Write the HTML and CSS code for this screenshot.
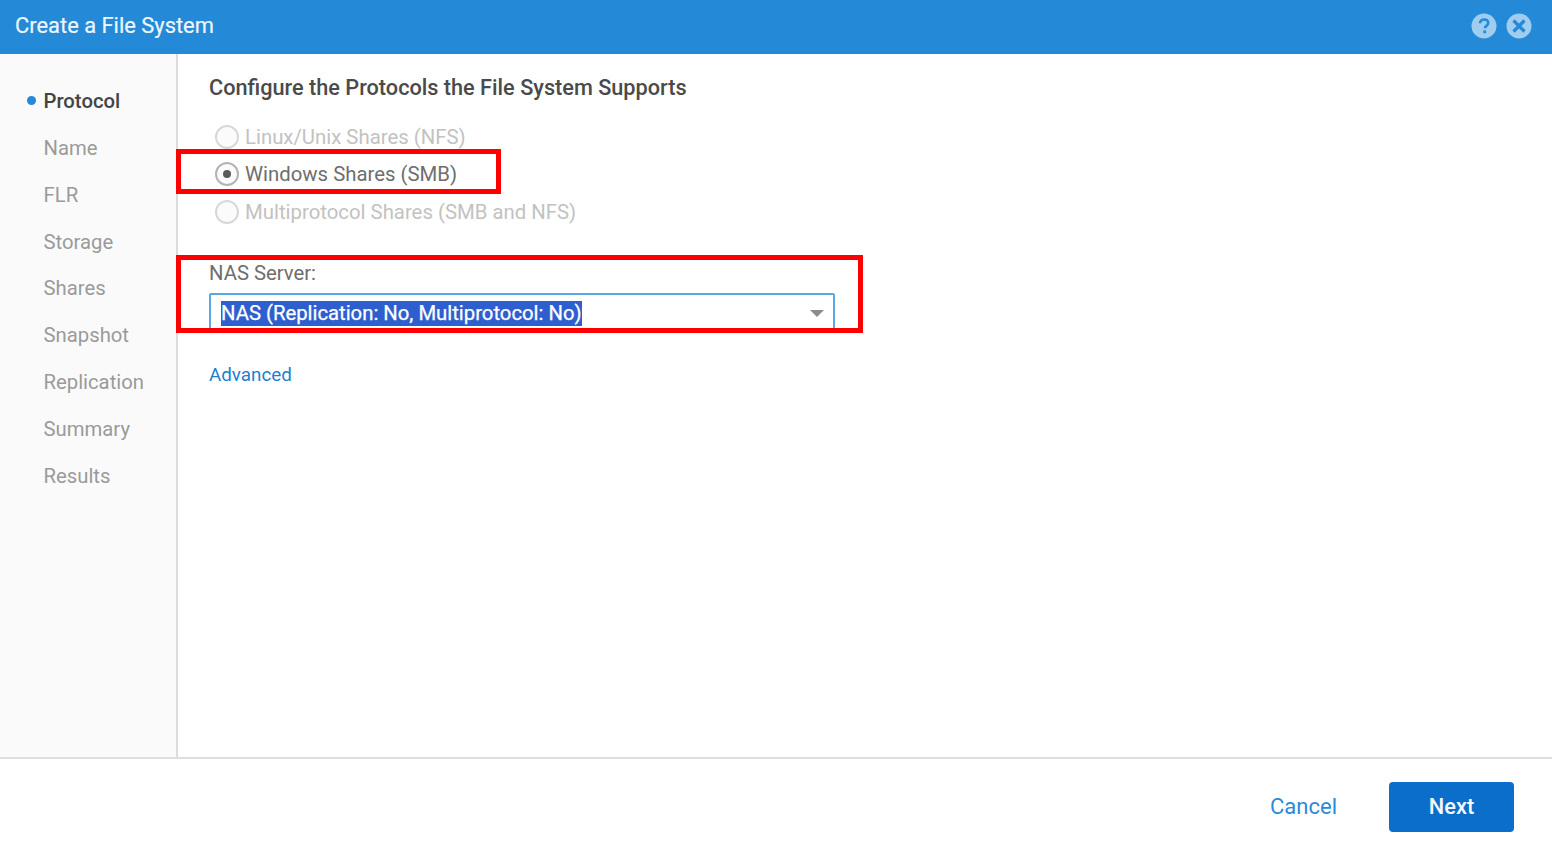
FILE: index.html
```html
<!DOCTYPE html>
<html lang="en">
<head>
<meta charset="utf-8">
<title>Create a File System</title>
<link rel="stylesheet" href="styles.css">
</head>
<body>
<div class="dialog">
  <header class="header">
    <h1 class="title">Create a File System</h1>
    <div class="header-icons">
      <svg class="hicon" viewBox="0 0 26 26" aria-hidden="true"><circle cx="13" cy="13" r="12.5" fill="#9fcdf0"/><path d="M9 10.3c0-2.4 1.8-3.8 4.1-3.8 2.4 0 4.1 1.4 4.1 3.4 0 1.6-.9 2.4-2 3.2-1 .7-1.3 1.2-1.3 2.2" fill="none" stroke="#2489d6" stroke-width="2.6"/><rect x="12.3" y="17.4" width="2.8" height="2.8" fill="#2489d6"/></svg>
      <svg class="hicon" viewBox="0 0 26 26" aria-hidden="true"><circle cx="13" cy="13" r="12.5" fill="#9fcdf0"/><path d="M7.5 7.5l11 11M18.5 7.5l-11 11" fill="none" stroke="#2489d6" stroke-width="3.2"/></svg>
    </div>
  </header>
  <div class="body">
    <nav class="steps">
      <div class="step active">Protocol</div>
      <div class="step">Name</div>
      <div class="step">FLR</div>
      <div class="step">Storage</div>
      <div class="step">Shares</div>
      <div class="step">Snapshot</div>
      <div class="step">Replication</div>
      <div class="step">Summary</div>
      <div class="step">Results</div>
    </nav>
    <main class="content">
      <h2 class="heading">Configure the Protocols the File System Supports</h2>
      <div class="options">
        <div class="option disabled"><span class="radio"></span>Linux/Unix Shares (NFS)</div>
        <div class="option"><span class="radio checked"></span>Windows Shares (SMB)</div>
        <div class="option disabled"><span class="radio"></span>Multiprotocol Shares (SMB and NFS)</div>
      </div>
      <div class="field-label">NAS Server:</div>
      <div class="select-clip">
        <div class="select"><span class="selected-text">NAS (Replication: No, Multiprotocol: No)</span><span class="caret"></span></div>
      </div>
      <a class="advanced" href="#">Advanced</a>
      <div class="mark mark-smb"></div>
      <div class="mark mark-nas"></div>
    </main>
  </div>
  <footer class="footer">
    <a class="cancel" href="#">Cancel</a>
    <button class="next" type="button">Next</button>
  </footer>
</div>
</body>
</html>
```
FILE: styles.css
```css
* { box-sizing: border-box; }
html, body { margin: 0; height: 100%; }
body { background: #fff; font-family: Roboto, "Liberation Sans", sans-serif; color: #6e6e6e; overflow: hidden; }
.dialog { width: 1552px; height: 851px; display: flex; flex-direction: column; }
.header { height: 54px; flex: none; background: #2489d6; display: flex; align-items: center; justify-content: space-between; padding: 0 20px 0 15px; }
.title { margin: 0; font-size: 21.9px; font-weight: 400; color: #eef6fc; position: relative; top: -2px; -webkit-text-stroke: 0.2px #eef6fc; }
.header-icons { display: flex; gap: 9px; position: relative; top: -1px; }
.hicon { width: 26px; height: 26px; display: block; }
.body { height: 703px; flex: none; display: flex; }
.steps { width: 178px; flex: none; background: #fafafa; border-right: 2px solid #dcdcdc; padding: 23.9px 0 0 43.5px; }
.step { height: 46.875px; line-height: 47px; font-size: 20.3px; color: #9a9a9a; position: relative; }
.step.active { color: #444; font-weight: 500; }
.step.active::before { content: ""; position: absolute; left: -17px; top: 18px; width: 9px; height: 9px; border-radius: 50%; background: #2489d6; }
.content { flex: 1; position: relative; padding: 20px 0 0 31px; }
.heading { margin: 0; height: 28px; line-height: 28px; font-size: 21.7px; font-weight: 500; color: #4a4a4a; }
.options { margin-top: 16px; }
.option { height: 37.5px; display: flex; align-items: center; font-size: 20.35px; color: #6e6e6e; }
.option.disabled { color: #c2c2c2; }
.radio { width: 24px; height: 24px; margin: 0 6px 0 6px; flex: none; border-radius: 50%; border: 2px solid #d8d8d8; background: #fbfbfb; display: flex; align-items: center; justify-content: center; }
.radio.checked { border-color: #b4b4b4; }
.radio.checked::after { content: ""; width: 8px; height: 8px; border-radius: 50%; background: #5a5a5a; }
.field-label { margin-top: 28px; height: 28px; line-height: 28px; font-size: 20.3px; color: #6e6e6e; }
.select-clip { margin-top: 6px; width: 626px; height: 36px; overflow: hidden; }
.select { height: 44px; border: 2px solid #5aa7e6; border-radius: 2px; padding: 6px 0 0 10px; display: flex; align-items: flex-start; justify-content: space-between; }
.selected-text { background: #2f5fce; color: #fff; font-size: 20.3px; line-height: 25px; -webkit-text-stroke: 0.25px #fff; }
.caret { width: 0; height: 0; margin: 9px 9px 0 0; border-left: 7px solid transparent; border-right: 7px solid transparent; border-top: 7px solid #8c8c8c; }
.advanced { display: block; margin-top: 32px; font-size: 18.8px; line-height: 28px; color: #1b7fd0; text-decoration: none; width: max-content; }
.mark { position: absolute; border: 5px solid #ff0000; left: -2px; }
.mark-smb { top: 95px; width: 325px; height: 45px; }
.mark-nas { top: 201px; width: 687px; height: 78px; }
.footer { flex: 1; border-top: 2px solid #dedede; display: flex; align-items: flex-start; justify-content: flex-end; padding: 23px 38px 0 0; background: #fff; }
.cancel { font-size: 22px; line-height: 50px; color: #2c8ad8; text-decoration: none; margin-right: 52px; }
.next { width: 125px; height: 50px; border: 0; border-radius: 4px; padding: 0 0 2px; background: #0b6ecb; color: #f4f9fd; font: 500 21.8px Roboto, "Liberation Sans", sans-serif; }
```
